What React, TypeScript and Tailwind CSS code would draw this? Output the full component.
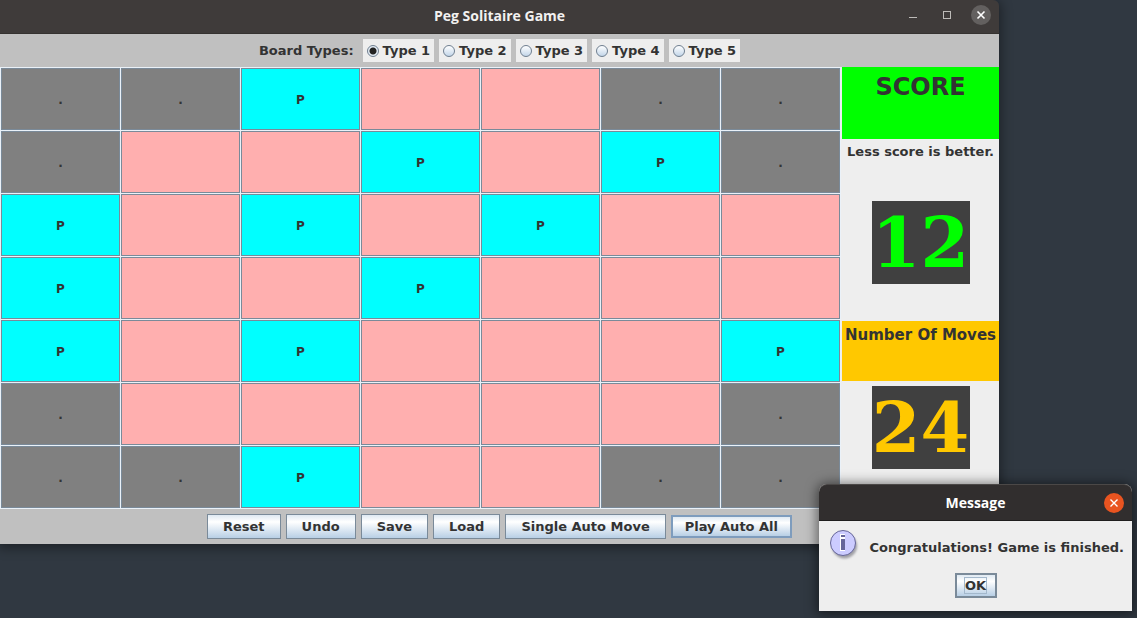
import { useState } from "react";
import type { ReactNode } from "react";

const BOARD = [
  "..P  ..",
  ".  P P.",
  "P P P  ",
  "P  P   ",
  "P P   P",
  ".     .",
  "..P  ..",
];

const BOARD_TYPES = ["Type 1", "Type 2", "Type 3", "Type 4", "Type 5"];
const ACTIONS = ["Reset", "Undo", "Save", "Load", "Single Auto Move"];

const CELL_COLORS: Record<string, string> = {
  ".": "bg-[#808080]",
  P: "bg-[#00ffff]",
  " ": "bg-[#ffafaf]",
};

function Cell({ kind }: { kind: string }) {
  return (
    <button
      aria-label={kind === " " ? "empty hole" : undefined}
      className={`flex h-[62px] items-center justify-center border border-[#7a8a99] pt-px text-[12px] ${CELL_COLORS[kind]}`}
    >
      {kind.trim()}
    </button>
  );
}

function ActionButton({ children, focused = false }: { children: ReactNode; focused?: boolean }) {
  return (
    <button
      className={`bg-linear-to-b from-[#dfe9f2] via-white via-30% to-[#b8cfe5] whitespace-nowrap ${
        focused
          ? "h-[23px] border-2 border-[#7e9cbd] px-3"
          : "h-[25px] border border-[#7a8a99] px-[15px]"
      }`}
    >
      {children}
    </button>
  );
}

function Counter({ value, color }: { value: number; color: string }) {
  return (
    <output
      className={`flex h-[83px] w-[98px] items-center justify-center bg-[#404040] font-['DejaVu_Serif',serif] text-[70px] leading-[83px] ${color}`}
    >
      {value}
    </output>
  );
}

function TitleBar() {
  return (
    <header className="grid h-[34px] grid-cols-[1fr_auto_1fr] items-center rounded-tr-md border-b border-[#353230] bg-[#3f3b3a] px-2 text-white">
      <h1 className="col-start-2 pb-0.5 font-['Open_Sans',sans-serif] text-[14px] text-[#f2f1f0]">
        Peg Solitaire Game
      </h1>
      <div className="flex items-center justify-end gap-4 pb-1">
        <button aria-label="Minimize" className="size-[18px]">
          <svg viewBox="0 0 18 18" className="size-[18px]" shapeRendering="crispEdges">
            <path d="M6 11.5h8" stroke="#bdbbb8" />
          </svg>
        </button>
        <button aria-label="Maximize" className="size-[18px]">
          <svg viewBox="0 0 18 18" className="size-[18px]" fill="none" shapeRendering="crispEdges">
            <path d="M6.5 5.5h7v7h-7z" stroke="#bdbbb8" />
          </svg>
        </button>
        <button aria-label="Close" className="size-5 rounded-full bg-[#63605f]">
          <svg viewBox="0 0 20 20" className="size-5">
            <path d="M6.5 6.5l7 7M13.5 6.5l-7 7" stroke="white" strokeWidth="1.6" />
          </svg>
        </button>
      </div>
    </header>
  );
}

function InfoIcon() {
  return (
    <svg viewBox="0 0 32 32" className="size-8" aria-hidden="true">
      <defs>
        <filter id="soft" x="-20%" y="-20%" width="150%" height="150%">
          <feGaussianBlur stdDeviation="1.3" />
        </filter>
      </defs>
      <circle cx="15.5" cy="17" r="12.5" fill="#a0a0a6" filter="url(#soft)" />
      <circle cx="14" cy="14" r="12.5" fill="#ccccff" stroke="#666699" />
      <path d="M11 5h5v4h-5zM11 9h5v13h-5z" fill="white" />
      <path d="M12 6h4v2h-4zM12 10h4v11h-4z" fill="#666699" />
    </svg>
  );
}

function MessageDialog() {
  return (
    <section
      role="dialog"
      aria-labelledby="message-title"
      className="absolute top-[484px] right-[5px] w-[313px] rounded-t-lg bg-[#eeeeee] shadow-[0_1px_12px_2px_rgba(0,0,0,0.5)]"
    >
      <header className="grid h-[37px] grid-cols-[1fr_auto_1fr] items-center rounded-t-lg border-t border-b border-t-[#4b4847] border-b-[#1f1d1d] bg-[#312e2e] px-2">
        <h2
          id="message-title"
          className="col-start-2 font-['Open_Sans',sans-serif] text-[14px] text-white"
        >
          Message
        </h2>
        <button aria-label="Close message" className="size-5 justify-self-end rounded-full bg-[#e95420]">
          <svg viewBox="0 0 20 20" className="size-5">
            <path d="M6.5 6.5l7 7M13.5 6.5l-7 7" stroke="white" strokeWidth="1.4" />
          </svg>
        </button>
      </header>
      <div className="flex items-center justify-between pt-2 pr-2 pl-2.5">
        <InfoIcon />
        <p className="pt-1.5 whitespace-nowrap">Congratulations! Game is finished.</p>
      </div>
      <div className="flex justify-center pt-3 pb-[13px]">
        <button className="flex h-[25px] w-[42px] items-center justify-center border-2 border-[#7a8a99] bg-linear-to-b from-[#dfe9f2] via-white via-30% to-[#b8cfe5]">
          <span className="border border-[#a3b8cc] leading-[15px]">OK</span>
        </button>
      </div>
    </section>
  );
}

export default function App() {
  const [boardType, setBoardType] = useState(BOARD_TYPES[0]);

  return (
    <div className="relative min-h-screen bg-[#303841] pr-[138px] font-['DejaVu_Sans',sans-serif] text-[13px] leading-4 font-bold text-[#333333]">
      <main className="rounded-tr-md shadow-[0_2px_12px_2px_rgba(0,0,0,0.4)]">
        <TitleBar />
        <fieldset className="flex h-[33px] items-center justify-center gap-[5px] bg-[#c0c0c0]">
          <span className="pr-1">Board Types:</span>
          {BOARD_TYPES.map((type) => (
            <label key={type} className="flex h-[23px] items-center gap-1 bg-[#eeeeee] px-1">
              <input
                type="radio"
                name="board-type"
                checked={boardType === type}
                onChange={() => setBoardType(type)}
                className={`size-3 appearance-none rounded-full border border-[#6f7f90] ${
                  boardType === type
                    ? "bg-[radial-gradient(circle,#222_0_3px,#e4edf6_4px)]"
                    : "bg-linear-to-b from-white to-[#c3d6e9]"
                }`}
              />
              {type}
            </label>
          ))}
        </fieldset>
        <div className="flex bg-[#eeeeee]">
          <div className="mr-px grid flex-1 grid-cols-7 gap-px bg-[#eaf1f8] p-px">
            {BOARD.flatMap((row, r) =>
              row.split("").map((kind, c) => <Cell key={`${r}-${c}`} kind={kind} />),
            )}
          </div>
          <aside className="flex w-[157px] flex-col items-center">
            <h2 className="h-[72px] w-full bg-[#00ff00] pt-1.5 text-center text-[24px] leading-[29px]">
              SCORE
            </h2>
            <p className="pt-[5px] whitespace-nowrap">Less score is better.</p>
            <div className="pt-[41px] pb-[37px]">
              <Counter value={12} color="text-[#00ff00]" />
            </div>
            <h2 className="mb-[5px] h-[60px] w-full bg-[#ffc800] pt-[5px] text-center text-[15px] leading-[18px] whitespace-nowrap">
              Number Of Moves
            </h2>
            <Counter value={24} color="text-[#ffc800]" />
          </aside>
        </div>
        <footer className="flex h-[35px] items-center justify-center gap-[5px] bg-[#c0c0c0]">
          {ACTIONS.map((action) => (
            <ActionButton key={action}>{action}</ActionButton>
          ))}
          <ActionButton focused>Play Auto All</ActionButton>
        </footer>
      </main>
      <MessageDialog />
    </div>
  );
}
